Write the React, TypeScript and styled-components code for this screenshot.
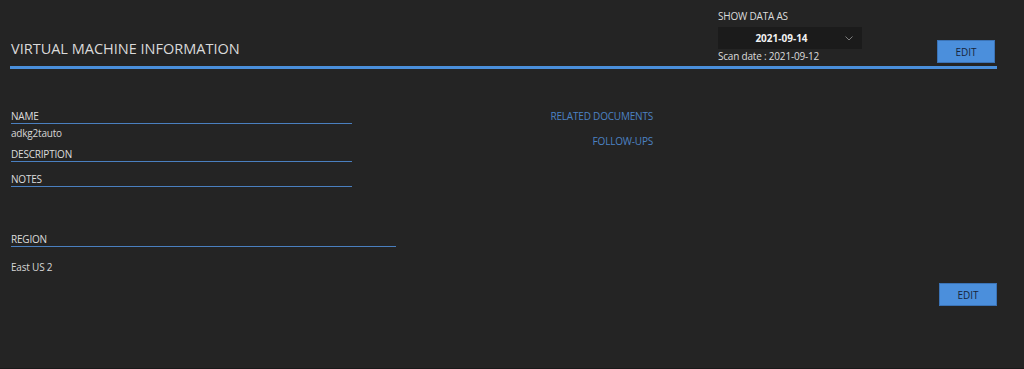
import styled, { createGlobalStyle } from 'styled-components';

const GlobalStyle = createGlobalStyle`
  html, body {
    margin: 0;
    padding: 0;
    background: #242424;
  }
  body {
    font-family: "Open Sans", "Noto Sans", sans-serif;
  }
`;

interface FieldProps {
  label: string;
  value?: string;
  wide?: boolean;
}

function Field({ label, value, wide }: FieldProps) {
  return (
    <FieldBox $wide={wide}>
      <Label>{label}</Label>
      {value && <Value>{value}</Value>}
    </FieldBox>
  );
}

export default function App() {
  return (
    <>
      <GlobalStyle />
      <Page>
        <Header>
          <Title>VIRTUAL MACHINE INFORMATION</Title>
          <HeaderRight>
            <ShowData>
              <SmallText>SHOW DATA AS</SmallText>
              <Select>
                <SelectValue>2021-09-14</SelectValue>
                <svg width="8" height="5" viewBox="0 0 8 5">
                  <polyline points="0.5,0.5 4,4 7.5,0.5" fill="none" stroke="#7d7d7d" strokeWidth="1" />
                </svg>
              </Select>
              <ScanDate>Scan date : 2021-09-12</ScanDate>
            </ShowData>
            <EditButton>EDIT</EditButton>
          </HeaderRight>
        </Header>

        <Body>
          <LeftColumn>
            <Field label="NAME" value="adkg2tauto" />
            <Field label="DESCRIPTION" />
            <Field label="NOTES" />
            <RegionBlock>
              <Field label="REGION" wide />
              <RegionValue>East US 2</RegionValue>
            </RegionBlock>
          </LeftColumn>
          <Links>
            <LinkText>RELATED DOCUMENTS</LinkText>
            <LinkText>FOLLOW-UPS</LinkText>
          </Links>
        </Body>

        <Footer>
          <EditButton>EDIT</EditButton>
        </Footer>
      </Page>
    </>
  );
}

// styled-components
const Page = styled.div`
  box-sizing: border-box;
  height: 369px;
  padding-left: 10px;
  border-bottom: 1px solid #1a1a1a;
  overflow: hidden;
`;

const Header = styled.header`
  display: flex;
  justify-content: space-between;
  align-items: flex-end;
  margin-right: 27px;
  padding: 10px 2px 3px 1px;
  border-bottom: 3px solid #4a8fdb;
`;

const Title = styled.h1`
  margin: 0 0 4px;
  font-size: 14.5px;
  line-height: 20px;
  font-weight: 400;
  color: #dadada;
`;

const HeaderRight = styled.div`
  display: flex;
  align-items: flex-end;
  gap: 75px;
`;

const ShowData = styled.div`
  display: flex;
  flex-direction: column;
`;

const SmallText = styled.div`
  font-size: 10px;
  line-height: 13px;
  letter-spacing: -0.2px;
  color: #dcdcdc;
  margin-bottom: 4px;
`;

const Select = styled.div`
  width: 144px;
  height: 22px;
  display: flex;
  align-items: center;
  background: #1b1b1b;

  svg {
    margin-right: 9px;
  }
`;

const SelectValue = styled.span`
  flex: 1;
  text-align: center;
  font-size: 10px;
  font-weight: 700;
  color: #f2f2f2;
`;

const ScanDate = styled.div`
  font-size: 10px;
  line-height: 14px;
  letter-spacing: -0.2px;
  color: #dcdcdc;
`;

const EditButton = styled.button`
  box-sizing: border-box;
  width: 58px;
  height: 23px;
  padding: 0;
  background: #4b8fdc;
  border: 1px solid #3b73b6;
  color: #17253a;
  font-family: "Open Sans", "Noto Sans", sans-serif;
  font-size: 10px;
  font-weight: 500;
  cursor: pointer;
`;

const Body = styled.main`
  display: flex;
  margin-top: 41px;
  padding-left: 1px;
`;

const LeftColumn = styled.div`
  width: 386px;
  display: flex;
  flex-direction: column;
`;

const FieldBox = styled.div<{ $wide?: boolean }>`
  width: ${(p) => (p.$wide ? '385px' : '341px')};
  margin-bottom: 11px;
`;

const Label = styled.div`
  font-size: 10px;
  line-height: 13px;
  letter-spacing: -0.2px;
  color: #dcdcdc;
  border-bottom: 1px solid #4a7fbf;
`;

const Value = styled.div`
  margin: 2px 0 -3px;
  font-size: 10px;
  line-height: 14px;
  letter-spacing: -0.2px;
  color: #d6d6d6;
`;

const RegionBlock = styled.div`
  margin-top: 35px;

  ${FieldBox} {
    margin-bottom: 0;
  }
`;

const RegionValue = styled.div`
  margin-top: 13px;
  font-size: 10px;
  line-height: 14px;
  letter-spacing: -0.2px;
  color: #d6d6d6;
`;

const Links = styled.div`
  width: 256px;
  display: flex;
  flex-direction: column;
  align-items: flex-end;
  gap: 12px;
`;

const LinkText = styled.a`
  font-size: 10px;
  line-height: 13px;
  letter-spacing: -0.2px;
  color: #4c82c3;
  cursor: pointer;
`;

const Footer = styled.footer`
  display: flex;
  justify-content: flex-end;
  margin: 9px 27px 0 0;
`;
